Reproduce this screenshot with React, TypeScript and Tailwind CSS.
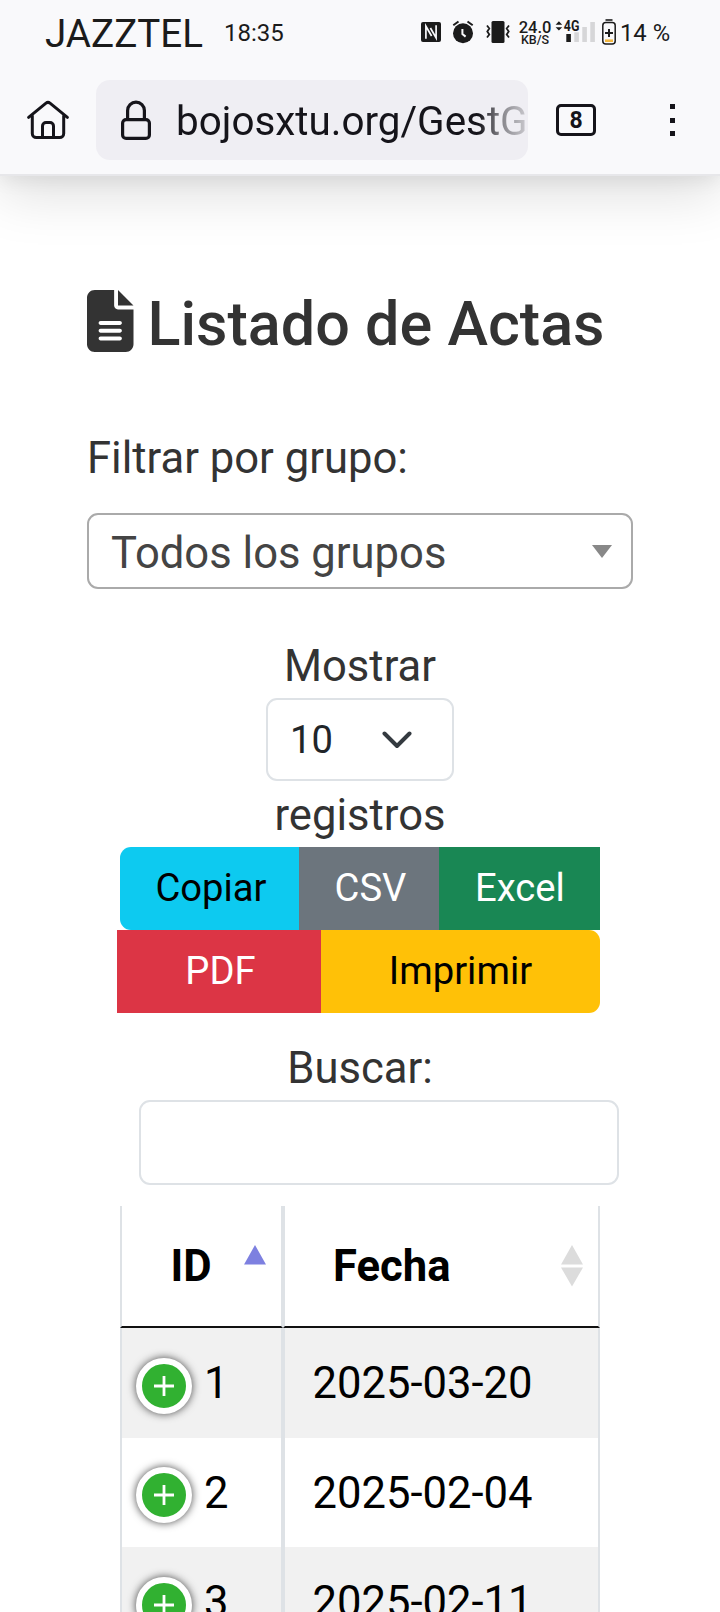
import React, { useState } from "react";
import { FaFileLines } from "react-icons/fa6";

const actas = [
  { id: 1, fecha: "2025-03-20" },
  { id: 2, fecha: "2025-02-04" },
  { id: 3, fecha: "2025-02-11" },
];

function StatusBar() {
  return (
    <div className="flex h-[80px] items-start pl-[45px] text-[#1b1b1b]">
      <span className="mt-[11px] w-[179px] text-[38.6px] leading-[46px] whitespace-nowrap">JAZZTEL</span>
      <span className="mt-[18px] w-[197px] text-[24px] leading-[30px]">18:35</span>

      {/* NFC */}
      <svg className="mt-[22px] h-[20px] w-[20px] shrink-0" viewBox="0 0 20 20" fill="none">
        <rect width="20" height="20" rx="2" fill="#1b1b1b" />
        <path d="M4.9 16.8V4.2L10.6 14M15.1 3.2v12.6L9.4 6" stroke="#f9f9fb" strokeWidth="1.7" />
      </svg>

      {/* Alarma */}
      <svg className="mt-[20px] ml-[11px] h-[24px] w-[22px] shrink-0" viewBox="0 0 22 24" fill="none">
        <circle cx="11" cy="13.2" r="10" fill="#1b1b1b" />
        <path d="M1.3 5.3L6.5 1.5M20.7 5.3L15.5 1.5" stroke="#1b1b1b" strokeWidth="2" />
        <path d="M10.4 9v5l3.2 2.6" stroke="#f9f9fb" strokeWidth="2" />
      </svg>

      {/* Vibración */}
      <svg className="mt-[20px] ml-[12px] h-[24px] w-[24px] shrink-0" viewBox="0 0 24 24" fill="none" stroke="#1b1b1b" strokeWidth="1.8">
        <rect x="5.5" y="1" width="13" height="22" rx="1.5" fill="#1b1b1b" stroke="none" />
        <path d="M1 5.5l2.3 3-2 3 2 3-2.3 3M23 5.5l-2.3 3 2 3-2 3 2.3 3" />
      </svg>

      <div className="mt-[20px] ml-[7px] flex w-[36px] flex-col items-center font-medium">
        <span className="text-[16.5px] leading-[15px]">24.0</span>
        <span className="text-[12.5px] leading-[10px]">KB/S</span>
      </div>

      {/* Señal 4G */}
      <svg className="mt-[20px] ml-[2px] h-[24px] w-[42px] shrink-0" viewBox="0 0 42 24">
        <path d="M.6 4.8L3.9 1.2l3.3 3.6zM.6 7.2L3.9 10.6 7.2 7.2z" fill="#1b1b1b" />
        <text x="8.8" y="11.2" fontSize="14" fontWeight="700" textLength="15.6" lengthAdjust="spacingAndGlyphs" fill="#1b1b1b">
          4G
        </text>
        <rect x="11.3" y="14" width="4.6" height="8" fill="#1b1b1b" />
        <rect x="19.3" y="12.3" width="4.6" height="9.7" fill="#d6d6d8" />
        <rect x="27.3" y="7" width="4.6" height="15" fill="#d6d6d8" />
        <rect x="35.3" y="2" width="4.6" height="20" fill="#d6d6d8" />
      </svg>

      {/* Batería */}
      <svg className="mt-[19px] ml-[5px] h-[26px] w-[14px] shrink-0" viewBox="0 0 14 26" fill="none">
        <path d="M3.5 1h7" stroke="#1b1b1b" strokeWidth="1.6" />
        <rect x=".8" y="3.6" width="12.4" height="21.4" rx="3" stroke="#1b1b1b" strokeWidth="1.5" />
        <path d="M7 10v8M3 14h8" stroke="#1b1b1b" strokeWidth="2" />
        <path d="M3 21.7h8" stroke="#f3b740" strokeWidth="2.6" />
      </svg>
      <span className="mt-[18px] ml-[4px] text-[23.8px] leading-[30px] whitespace-nowrap">14 %</span>
    </div>
  );
}

function BrowserBar() {
  return (
    <div className="flex h-[80px] items-center pl-[26px] text-[#15141a]">
      <svg className="h-[42px] w-[44px] shrink-0" viewBox="0 0 44 42" fill="none" stroke="#15141a" strokeWidth="3" strokeLinecap="round" strokeLinejoin="round">
        <path d="M2.6 18.4L20 4.2Q22 2.6 24 4.2L41.4 18.4" />
        <path d="M6.3 17v17.5a4 4 0 0 0 4 4h23.4a4 4 0 0 0 4-4V17" />
        <path d="M16.5 38V27a3.5 3.5 0 0 1 3.5-3.5h4a3.5 3.5 0 0 1 3.5 3.5V38" />
      </svg>

      <div className="ml-[26px] flex h-[80px] w-[432px] shrink-0 items-center rounded-[14px] bg-[#efeef3] pl-[25px]">
        <svg className="h-[40px] w-[30px] shrink-0" viewBox="0 0 30 40" fill="none" stroke="#15141a" strokeWidth="3.2">
          <rect x="1.6" y="19.6" width="26.8" height="18.8" rx="3.5" />
          <path d="M6.6 19V10.5a8.4 8.4 0 0 1 16.8 0V19" />
        </svg>
        <div className="ml-[25px] h-[64px] w-[352px] overflow-hidden pt-[4px] [mask-image:linear-gradient(to_right,#000_86%,rgba(0,0,0,0.5)_92%,rgba(0,0,0,0.15)_100%)]">
          <span className="block text-[40.4px] leading-[60px] whitespace-nowrap">bojosxtu.org/GestG</span>
        </div>
      </div>

      <div className="ml-[28px] flex h-[32px] w-[40px] shrink-0 items-center justify-center rounded-[5px] border-3 border-[#15141a]">
        <span className="pt-[1px] text-[23px] leading-[26px] font-bold">8</span>
      </div>

      <div className="ml-[74px] flex flex-col gap-[8.5px]">
        <span className="h-[5px] w-[5px] bg-[#15141a]" />
        <span className="h-[5px] w-[5px] bg-[#15141a]" />
        <span className="h-[5px] w-[5px] bg-[#15141a]" />
      </div>
    </div>
  );
}

function SortArrows({ activo }: { activo?: boolean }) {
  return (
    <svg className="h-[44px] w-[24px]" viewBox="0 0 24 44">
      <path d="M12 1L23 20.5H1z" fill={activo ? "#7d80e0" : "#dcdcdc"} />
      {!activo && <path d="M1 23.5H23L12 42.5z" fill="#dcdcdc" />}
    </svg>
  );
}

function App() {
  const [buscar, setBuscar] = useState("");

  const handleBuscar = (e: React.ChangeEvent<HTMLInputElement>) => {
    setBuscar(e.target.value);
  };

  return (
    <div className="h-[1612px] w-[720px] overflow-hidden bg-white font-[Roboto,sans-serif] text-[43.6px] text-[#333333]">
      <header className="h-[176px] border-b-2 border-[#e7e7ea] bg-[#f9f9fb] shadow-[0_18px_52px_rgba(0,0,0,0.13),0_4px_18px_rgba(0,0,0,0.07)]">
        <StatusBar />
        <BrowserBar />
      </header>

      <main className="pt-[110px]">
        <h1 className="ml-[87px] flex h-[70px] items-center text-[61.1px] leading-[70px] font-medium whitespace-nowrap">
          <FaFileLines className="h-[62px] w-[46.5px] shrink-0" />
          <span className="ml-[14px] pt-[5px]">Listado de Actas</span>
        </h1>

        <label className="mt-[73px] ml-[87px] block leading-[60px]">Filtrar por grupo:</label>
        <div className="mt-[24px] ml-[87px] flex h-[76px] w-[546px] items-center justify-between rounded-[11px] border-2 border-[#aaaaaa] pr-[19px] pl-[22px]">
          <span className="pt-[5px] leading-[60px] text-[#444444]">Todos los grupos</span>
          <svg className="h-[13px] w-[20px]" viewBox="0 0 20 13">
            <path d="M0 0h20L10 13z" fill="#888888" />
          </svg>
        </div>

        {/* Cantidad de registros */}
        <div className="mt-[48px] flex flex-col items-center">
          <span className="leading-[60px]">Mostrar</span>
          <div className="mt-[1px] flex h-[83px] w-[188px] items-center rounded-[11px] border-2 border-[#dee2e6] pl-[22px] text-[38.2px] text-[#212529]">
            <span className="pt-[1px] leading-[60px]">10</span>
            <svg className="ml-[49px] h-[20px] w-[30px]" viewBox="0 0 30 20" fill="none">
              <path d="M2.5 3.5L15 16 27.5 3.5" stroke="#343a40" strokeWidth="4" strokeLinecap="round" strokeLinejoin="round" />
            </svg>
          </div>
          <span className="mt-[5px] leading-[60px]">registros</span>
        </div>

        {/* Botones de exportación */}
        <div className="mt-[1px] text-[38.2px] leading-[83px]">
          <div className="ml-[120px] flex h-[83px] w-[480px] text-center">
            <button className="w-[179px] rounded-l-[11px] bg-[#0dcaf0] pl-[3px] text-black">Copiar</button>
            <button className="w-[140px] bg-[#6c757d] pl-[3px] text-white">CSV</button>
            <button className="w-[161px] bg-[#198754] pl-[1px] text-white">Excel</button>
          </div>
          <div className="ml-[117px] flex h-[83px] w-[483px] text-center">
            <button className="w-[204px] bg-[#dc3545] pl-[3px] text-white">PDF</button>
            <button className="w-[279px] rounded-r-[11px] bg-[#ffc107] text-black">Imprimir</button>
          </div>
        </div>

        <label className="mt-[26px] block text-center leading-[60px]">Buscar:</label>
        <input
          type="text"
          value={buscar}
          onChange={handleBuscar}
          className="mt-[1px] ml-[139px] block h-[85px] w-[480px] rounded-[11px] border-2 border-[#dee2e6] px-[22px] text-[38.2px] focus:outline-none"
        />

        {/* Tabla */}
        <div className="mt-[21px] ml-[120px] w-[480px] text-black">
          <div className="flex h-[122px] font-bold">
            <div className="flex w-[163px] border-x-2 border-b-2 border-x-[#dee2e6] border-b-[#111111] pl-[48.5px]">
              <span className="mt-[31px] w-[72.5px] leading-[60px]">ID</span>
              <div className="mt-[38px]">
                <SortArrows activo />
              </div>
            </div>
            <div className="flex w-[317px] border-x-2 border-b-2 border-x-[#dee2e6] border-b-[#111111] pl-[48px]">
              <span className="mt-[31px] w-[227px] leading-[60px]">Fecha</span>
              <div className="mt-[38px]">
                <SortArrows />
              </div>
            </div>
          </div>

          {actas.map((acta) => (
            <div key={acta.id} className="flex h-[109.5px] odd:bg-white even:bg-[#f1f1f1]">
              <div className="flex w-[163px] items-center border-x-2 border-[#dee2e6] pl-[13.5px]">
                <span className="mt-[6px] flex h-[56px] w-[56px] shrink-0 items-center justify-center rounded-full border-6 border-white bg-[#31b131] shadow-[0_0_8px_#444444]">
                  <svg className="h-[20px] w-[20px]" viewBox="0 0 20 20" stroke="#ffffff" strokeWidth="2.8">
                    <path d="M10 0v20M0 10h20" />
                  </svg>
                </span>
                <span className="ml-[12.5px] pt-[3px] leading-[60px]">{acta.id}</span>
              </div>
              <div className="flex w-[317px] items-center border-x-2 border-[#dee2e6] pl-[27.5px]">
                <span className="pt-[3px] leading-[60px]">{acta.fecha}</span>
              </div>
            </div>
          ))}
        </div>
      </main>
    </div>
  );
}

export default App;
